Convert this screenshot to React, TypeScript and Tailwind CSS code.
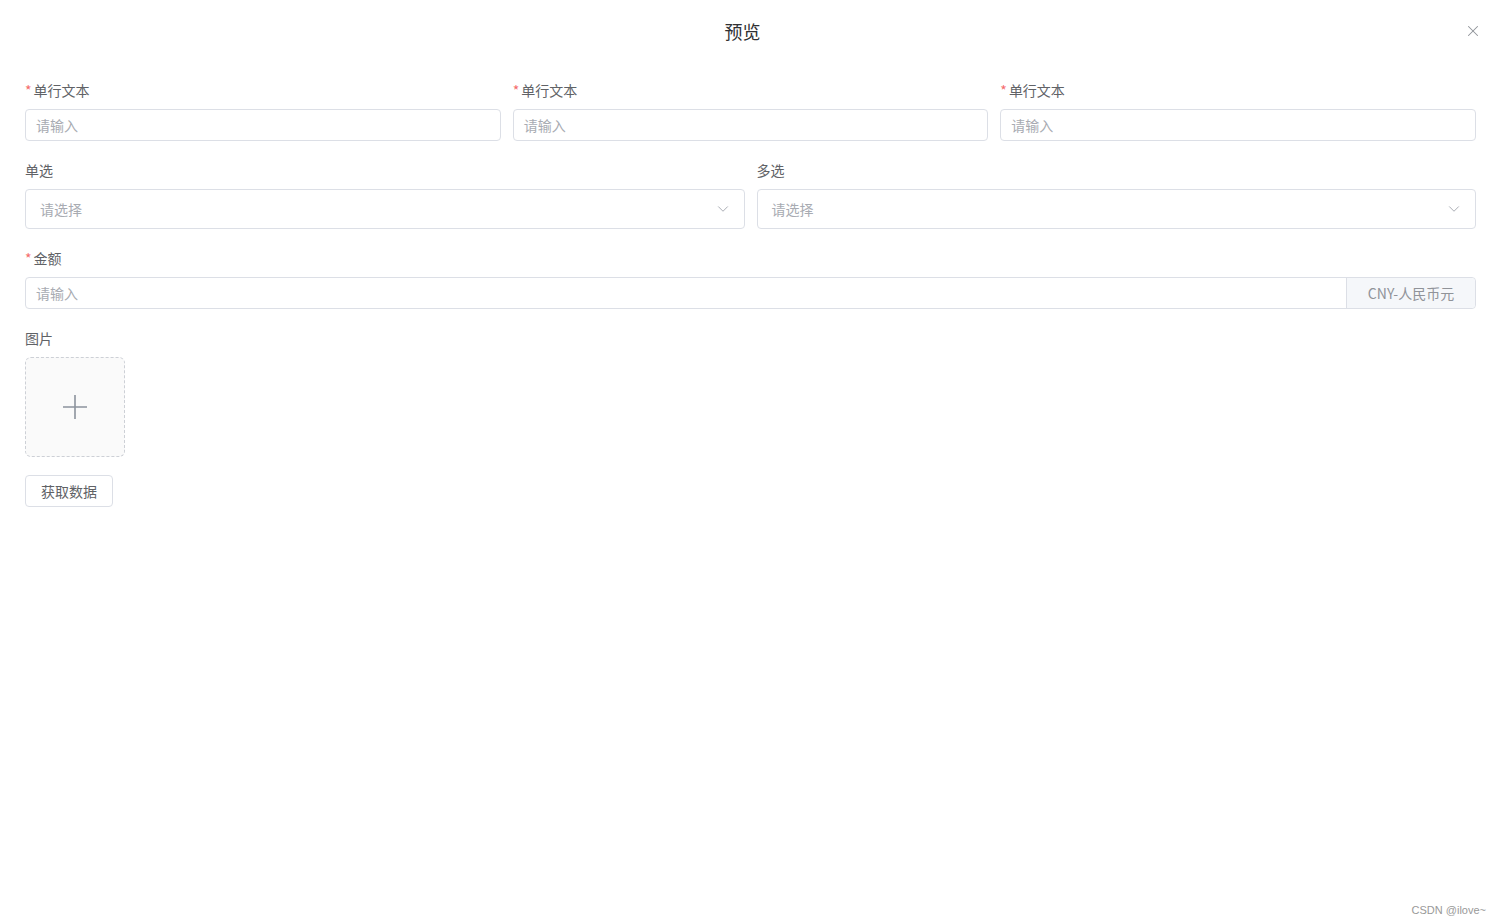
import { X, ChevronDown } from "lucide-react";

const FONT = { fontFamily: '"Noto Sans CJK SC", "Noto Sans", sans-serif' };

function Label({ text, required }: { text: string; required?: boolean }) {
  return (
    <div className="flex h-5 items-center mb-[9px] text-[14px] leading-5 text-[#606266]">
      {required && <span className="mr-[2px] text-[#f56c6c]">*</span>}
      <span>{text}</span>
    </div>
  );
}

function TextInput() {
  return (
    <div className="flex h-8 items-center rounded-[4px] border border-[#dcdfe6] bg-white px-[10px] text-[14px] text-[#a8abb2]">
      请输入
    </div>
  );
}

function SelectInput() {
  return (
    <div className="flex h-10 items-center justify-between rounded-[4px] border border-[#dcdfe6] bg-white pl-[14px] pr-[12px] text-[14px] text-[#a8abb2]">
      <span>请选择</span>
      <ChevronDown className="h-[18px] w-[18px] text-[#a8abb2]" strokeWidth={1.3} />
    </div>
  );
}

export default function App() {
  return (
    <div className="relative h-[924px] w-full bg-white" style={FONT}>
      {/* Header */}
      <div className="relative flex h-[62px] items-center justify-center pr-[16px]">
        <span className="text-[18px] leading-6 text-[#303133]">预览</span>
        <X className="absolute right-[19px] top-[22px] h-[18px] w-[18px] text-[#909399]" strokeWidth={1.4} />
      </div>

      <div className="px-[25px] pt-[18px]">
        {/* Row 1 */}
        <div className="grid grid-cols-3 gap-x-[12px]">
          {[0, 1, 2].map((i) => (
            <div key={i}>
              <Label text="单行文本" required />
              <TextInput />
            </div>
          ))}
        </div>

        {/* Row 2 */}
        <div className="mt-[19px] grid grid-cols-2 gap-x-[12px]">
          <div>
            <Label text="单选" />
            <SelectInput />
          </div>
          <div>
            <Label text="多选" />
            <SelectInput />
          </div>
        </div>

        {/* Amount */}
        <div className="mt-[19px]">
          <Label text="金额" required />
          <div className="flex h-8 rounded-[4px] border border-[#dcdfe6]">
            <div className="flex flex-1 items-center px-[10px] text-[14px] text-[#a8abb2]">请输入</div>
            <div className="flex w-[129px] items-center justify-center rounded-r-[4px] border-l border-[#dcdfe6] bg-[#f5f7fa] text-[14px] text-[#909399]">
              CNY-人民币元
            </div>
          </div>
        </div>

        {/* Picture */}
        <div className="mt-[19px]">
          <Label text="图片" />
          <div className="flex h-[100px] w-[100px] items-center justify-center rounded-[6px] border border-dashed border-[#cdd0d6] bg-[#fafafa]">
            <svg width="24" height="24" viewBox="0 0 24 24" fill="none" stroke="#8c939d" strokeWidth="1.6">
              <path d="M12 0v24M0 12h24" />
            </svg>
          </div>
        </div>

        <button className="mt-[18px] flex h-8 w-[88px] items-center justify-center rounded-[4px] border border-[#dcdfe6] bg-white text-[14px] text-[#606266]">
          获取数据
        </button>
      </div>

      <div
        className="absolute bottom-[6px] right-[15px] text-[11px] text-[#999]"
        style={{ fontFamily: '"Liberation Sans", sans-serif' }}
      >
        CSDN @ilove~
      </div>
    </div>
  );
}
